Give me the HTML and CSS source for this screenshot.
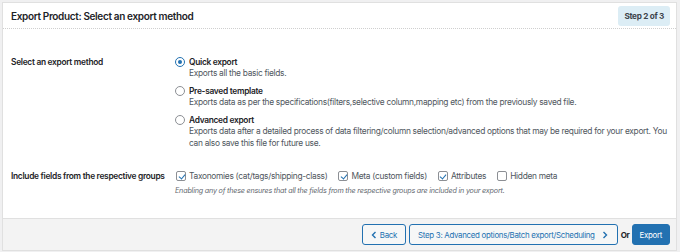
FILE: index.html
```html
<!DOCTYPE html>
<html lang="en">

<head>
    <meta charset="UTF-8">
    <title>Export Product</title>
    <link rel="stylesheet" href="styles.css">
</head>

<body>
    <div class="panel">
        <!-- 头部 -->
        <div class="card">
            <div class="card-head">
                <h2 class="title">Export Product: Select an export method</h2>
                <span class="step">Step 2 of 3</span>
            </div>
            <div class="card-body">
                <!-- 导出方式 -->
                <div class="row">
                    <div class="label">Select an export method</div>
                    <div class="field">
                        <label class="option">
                            <span class="radio checked"></span>
                            <span class="option-text">
                                <b>Quick export</b>
                                <span>Exports all the basic fields.</span>
                            </span>
                        </label>
                        <label class="option">
                            <span class="radio"></span>
                            <span class="option-text">
                                <b>Pre-saved template</b>
                                <span>Exports data as per the specifications(filters,selective column,mapping etc) from the previously saved file.</span>
                            </span>
                        </label>
                        <label class="option">
                            <span class="radio"></span>
                            <span class="option-text">
                                <b>Advanced export</b>
                                <span>Exports data after a detailed process of data filtering/column selection/advanced options that may be required for your export. You can also save this file for future use.</span>
                            </span>
                        </label>
                    </div>
                </div>
                <!-- 字段分组 -->
                <div class="row row-groups">
                    <div class="label">Include fields from the respective groups</div>
                    <div class="field">
                        <div class="checks">
                            <label class="check"><span class="box checked"></span>Taxonomies (cat/tags/shipping-class)</label>
                            <label class="check"><span class="box checked"></span>Meta (custom fields)</label>
                            <label class="check"><span class="box checked"></span>Attributes</label>
                            <label class="check"><span class="box"></span>Hidden meta</label>
                        </div>
                        <p class="note">Enabling any of these ensures that all the fields from the respective groups are included in your export.</p>
                    </div>
                </div>
            </div>
        </div>
        <!-- 底部按钮 -->
        <div class="foot">
            <button class="btn">
                <svg width="6" height="8" viewBox="0 0 6 8"><path d="M4.5 1 L1.5 4 L4.5 7" fill="none" stroke="currentColor" stroke-width="1.4"/></svg>
                Back
            </button>
            <button class="btn btn-next">
                Step 3: Advanced options/Batch export/Scheduling
                <svg width="6" height="8" viewBox="0 0 6 8"><path d="M1.5 1 L4.5 4 L1.5 7" fill="none" stroke="currentColor" stroke-width="1.4"/></svg>
            </button>
            <span class="or">Or</span>
            <button class="btn btn-primary">Export</button>
        </div>
    </div>
</body>

</html>
```

FILE: styles.css
```css
* {
    margin: 0;
    padding: 0;
    box-sizing: border-box;
}

body {
    background: #f0f0f1;
    padding: 2px 3px 1px 2px;
    font-family: Inter, "Liberation Sans", sans-serif;
    font-size: 8.4px;
    letter-spacing: -0.3px;
    color: #50575e;
}

.panel {
    border: 1px solid #e0e0e0;
    background: #f3f3f3;
}

.card {
    background: #fff;
    border-bottom: 1px solid #e0e0e0;
}

.card-head {
    display: flex;
    justify-content: space-between;
    align-items: center;
    height: 26px;
    padding: 0 6px 0 8px;
    border-bottom: 1px dotted #cfcfcf;
}

.title {
    font-size: 10px;
    letter-spacing: -0.35px;
    font-weight: 600;
    color: #1d2327;
}

.step {
    background: #dcedf5;
    border-radius: 3px;
    padding: 5px 6px;
    font-size: 8.2px;
    font-weight: 700;
    color: #3c434a;
}

.card-body {
    padding: 27px 0 22px 8px;
}

.row {
    display: flex;
}

.label {
    width: 164px;
    flex: none;
    white-space: nowrap;
    font-weight: 600;
    color: #1d2327;
    line-height: 12px;
}

.field {
    flex: 1;
}

.option {
    display: flex;
    margin-bottom: 6px;
}

.radio {
    width: 10px;
    height: 10px;
    border: 1px solid #8c8f94;
    border-radius: 50%;
    margin: 1px 4px 0 0;
    flex: none;
    display: flex;
    align-items: center;
    justify-content: center;
}

.radio.checked {
    border-color: #2271b1;
}

.radio.checked::after {
    content: "";
    width: 4px;
    height: 4px;
    border-radius: 50%;
    background: #2271b1;
}

.option-text {
    display: flex;
    flex-direction: column;
    line-height: 12px;
    padding-right: 8px;
}

.option-text b {
    font-weight: 600;
    color: #1d2327;
    margin-bottom: -1px;
}

.row-groups {
    margin-top: 14px;
}

.row-groups .label {
    line-height: 14px;
}

.checks {
    display: flex;
    gap: 10px;
}

.check {
    display: flex;
    align-items: center;
    line-height: 14px;
}

.box {
    width: 10px;
    height: 10px;
    border: 1px solid #8c8f94;
    border-radius: 2px;
    margin: 0 3px 0 1px;
    position: relative;
}

.box.checked::after {
    content: "";
    position: absolute;
    left: 2.5px;
    top: 0.5px;
    width: 3px;
    height: 5px;
    border: solid #2271b1;
    border-width: 0 1.5px 1.5px 0;
    transform: rotate(40deg);
}

.note {
    font-style: italic;
    font-size: 7.2px;
    letter-spacing: -0.2px;
    line-height: 10px;
    color: #646970;
    margin-top: 3px;
}

.foot {
    display: flex;
    justify-content: flex-end;
    align-items: center;
    gap: 2px;
    height: 31px;
    padding-right: 6px;
}

.btn {
    display: flex;
    align-items: center;
    gap: 3px;
    height: 21px;
    padding: 0 8px;
    margin-right: 1px;
    border: 1px solid #2271b1;
    border-radius: 3px;
    background: #f6f7f7;
    color: #2271b1;
    font-family: inherit;
    font-size: 7.9px;
    letter-spacing: -0.3px;
}

.btn-next {
    gap: 7px;
    padding-right: 9px;
}

.btn-primary {
    background: #2271b1;
    color: #fff;
    padding: 0 7px;
    margin-right: 0;
}

.or {
    font-weight: 700;
    font-size: 8px;
    color: #1d2327;
}
```
